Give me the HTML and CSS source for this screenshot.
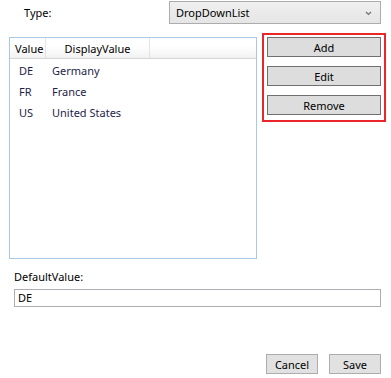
FILE: index.html
```html
<!DOCTYPE html>
<html lang="en">
<head>
    <meta charset="UTF-8" />
    <title>List Field Editor</title>
    <link rel="stylesheet" href="styles.css">
</head>
<body>
    <div class="dialog">
        <div class="type-row">
            <span class="type-label">Type:</span>
            <div class="combo">
                <span>DropDownList</span>
                <svg class="chevron" width="7" height="5" viewBox="0 0 7 5">
                    <path d="M1 1 L3.5 3.5 L6 1" fill="none" stroke="#707070" stroke-width="1.2"/>
                </svg>
            </div>
        </div>

        <div class="main">
            <div class="list-view">
                <div class="lv-header">
                    <div class="col col-value">Value</div>
                    <div class="col col-display">DisplayValue</div>
                    <div class="col col-rest"></div>
                </div>
                <div class="lv-row"><span class="cell-value">DE</span><span>Germany</span></div>
                <div class="lv-row"><span class="cell-value">FR</span><span>France</span></div>
                <div class="lv-row"><span class="cell-value">US</span><span>United States</span></div>
            </div>

            <div class="actions">
                <button class="btn">Add</button>
                <button class="btn">Edit</button>
                <button class="btn">Remove</button>
            </div>
        </div>

        <div class="default-label">DefaultValue:</div>
        <div class="text-box">DE</div>

        <div class="footer">
            <button class="btn btn-small">Cancel</button>
            <button class="btn btn-small">Save</button>
        </div>
    </div>
</body>
</html>
```

FILE: styles.css
```css
* {
    box-sizing: border-box;
}

body {
    margin: 0;
    background: #ffffff;
    font-family: "Noto Sans", "Open Sans", sans-serif;
    font-size: 11px;
    color: #000000;
}

.dialog {
    width: 391px;
    height: 378px;
    display: flex;
    flex-direction: column;
}

.type-row {
    display: flex;
    align-items: center;
    height: 24px;
    padding-top: 1px;
}

.type-label {
    width: 169px;
    padding-left: 24px;
}

.combo {
    width: 212px;
    height: 23px;
    display: flex;
    align-items: center;
    justify-content: space-between;
    padding: 0 8px 0 6px;
    border: 1px solid #acacac;
    background: linear-gradient(#f0f0f0, #e5e5e5);
}

.chevron {
    margin-top: 1px;
}

.main {
    display: flex;
    align-items: flex-start;
    margin-top: 9px;
}

.list-view {
    margin: 4px 0 0 9px;
    width: 248px;
    height: 222px;
    border: 1px solid #a9cae6;
}

.lv-header {
    display: flex;
    height: 21px;
    background: linear-gradient(#ffffff 40%, #f2f2f2);
    border-bottom: 1px solid #d5d5d5;
}

.col {
    display: flex;
    align-items: center;
    border-right: 1px solid #e3e3e3;
}

.col-value {
    width: 36px;
    padding-left: 5px;
}

.col-display {
    width: 104px;
    justify-content: center;
}

.col-rest {
    flex: 1;
    border-right: none;
}

.lv-header + .lv-row {
    margin-top: 1px;
}

.lv-row {
    display: flex;
    align-items: center;
    height: 21px;
    color: #1e1e4a;
}

.cell-value {
    width: 42px;
    padding-left: 9px;
}

.actions {
    margin-left: 5px;
    width: 124px;
    height: 89px;
    border: 2px solid #e8262b;
    padding: 2px 3px 0;
    display: flex;
    flex-direction: column;
    gap: 9px;
}

.btn {
    font-family: inherit;
    font-size: 11px;
    color: #000000;
    height: 20px;
    padding: 0;
    border: 1px solid #707070;
    background: #dddddd;
}

.default-label {
    margin: 8px 0 0 14px;
    height: 20px;
    line-height: 20px;
}

.text-box {
    margin: 2px 0 0 14px;
    width: 367px;
    height: 18px;
    border: 1px solid #abadb3;
    padding-left: 3px;
    line-height: 16px;
}

.footer {
    display: flex;
    justify-content: flex-end;
    gap: 11px;
    margin-top: 47px;
    padding-right: 10px;
}

.btn-small {
    width: 52px;
    height: 20px;
    border-color: #adadad;
    background: #e1e1e1;
}
```
